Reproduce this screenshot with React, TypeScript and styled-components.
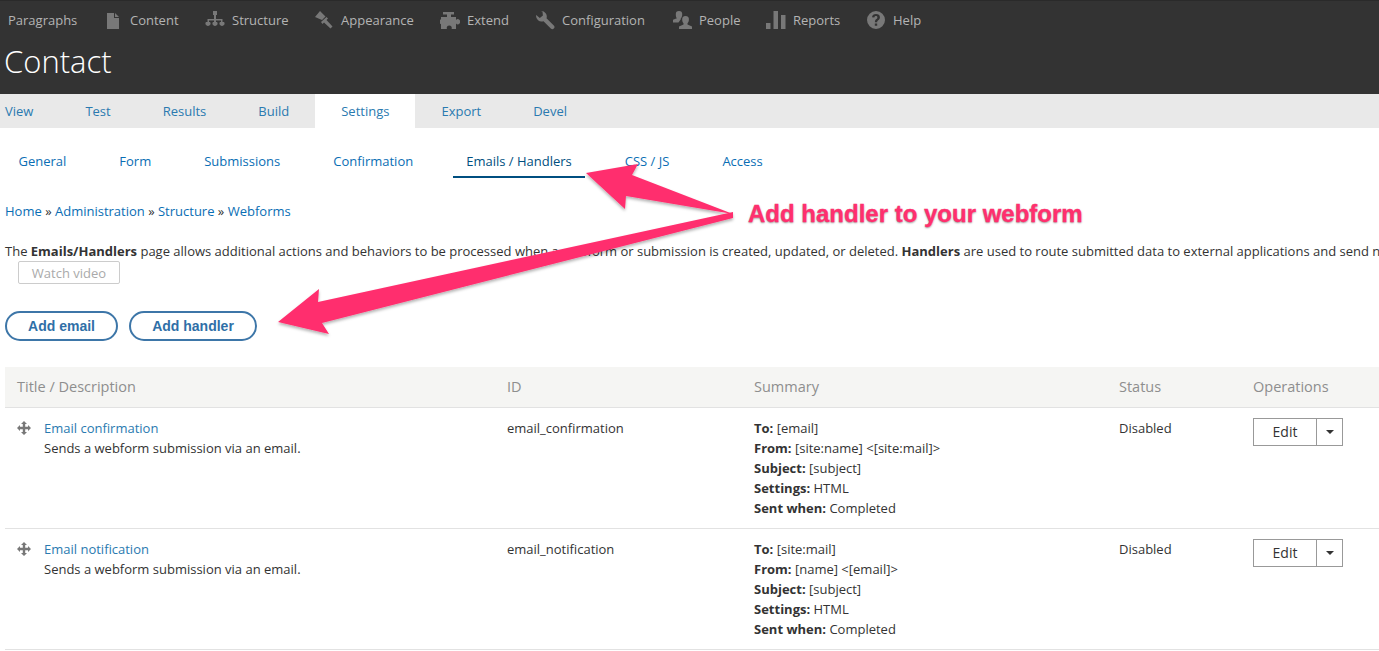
import styled, { createGlobalStyle } from "styled-components";
import type { ReactNode } from "react";

const GlobalStyle = createGlobalStyle`
  html, body {
    margin: 0;
    padding: 0;
    background: #fff;
    overflow: hidden;
  }
  body {
    font-family: "Open Sans", "Noto Sans", sans-serif;
    font-size: 13px;
    color: #333;
  }
`;

const Page = styled.div`
  position: relative;
  width: 1379px;
  height: 651px;
  overflow: hidden;
`;

const Header = styled.header`
  background: #333;
  height: 94px;
  border-top: 1px solid #2a2a2a;
  box-sizing: border-box;
`;

const Toolbar = styled.nav`
  display: flex;
  align-items: center;
  height: 38px;
  padding-left: 8px;
`;

const ToolItem = styled.a<{ $w: number }>`
  display: flex;
  align-items: center;
  width: ${(p) => p.$w}px;
  flex: none;
  color: #b4b4b4;
  white-space: nowrap;
`;

const ToolIcon = styled.svg`
  width: 20px;
  height: 20px;
  margin-right: 7px;
  fill: #787878;
  flex: none;
`;

const PageTitle = styled.h1`
  margin: 0;
  padding-left: 4px;
  color: #fff;
  font-size: 31px;
  font-weight: 300;
  line-height: 44px;
`;

const PrimaryTabs = styled.div`
  display: flex;
  height: 34px;
  background: #e9e9e9;
`;

const PrimaryTab = styled.a<{ $active?: boolean }>`
  display: flex;
  align-items: center;
  padding: 0 26px;
  background: ${(p) => (p.$active ? "#fff" : "transparent")};
  color: #2a7ab0;
  &:first-child {
    padding-left: 5px;
  }
`;

const SecondaryTabs = styled.div`
  display: flex;
  gap: 26px;
  padding: 23px 0 0 5px;
`;

const SecondaryTab = styled.a<{ $active?: boolean }>`
  padding: 0 13.5px 5px;
  line-height: 20px;
  border-bottom: 2px solid ${(p) => (p.$active ? "#004f80" : "transparent")};
  color: ${(p) => (p.$active ? "#004f80" : "#0a6eb4")};
`;

const Breadcrumb = styled.div`
  padding-left: 5px;
  margin-top: 23px;
  line-height: 20px;
  color: #333;
  a {
    color: #0a6eb4;
  }
`;

const Intro = styled.p`
  margin: 20px 0 0;
  padding-left: 5px;
  line-height: 20px;
  white-space: nowrap;
  color: #333;
`;

const VideoButton = styled.div`
  display: flex;
  align-items: center;
  justify-content: center;
  width: 102px;
  height: 23px;
  margin: 0 0 0 18px;
  box-sizing: border-box;
  border: 1px solid #ccc;
  border-radius: 2px;
  color: #aaa;
`;

const Actions = styled.div`
  display: flex;
  gap: 11px;
  padding-left: 5px;
  margin-top: 27px;
`;

const ActionButton = styled.a<{ $w: number }>`
  display: flex;
  align-items: center;
  justify-content: center;
  width: ${(p) => p.$w}px;
  height: 30px;
  box-sizing: border-box;
  border: 2px solid #3d76a8;
  border-radius: 15px;
  color: #2f6fa7;
  font-family: "Liberation Sans", Arial, sans-serif;
  font-size: 14px;
  font-weight: 700;
`;

const Table = styled.div`
  margin: 26px 0 0 5px;
`;

const Row = styled.div`
  display: grid;
  grid-template-columns: 490px 247px 365px 134px 1fr;
  height: 121px;
  box-sizing: border-box;
  border-bottom: 1px solid #e2e2e2;
  line-height: 20px;
`;

const HeadRow = styled(Row)`
  height: 41px;
  align-items: center;
  background: #f5f5f3;
  color: #8e8e8e;
  font-size: 14.5px;
`;

const Cell = styled.div`
  padding: 10px 0 0 12px;
  white-space: nowrap;
`;

const HeadCell = styled.div`
  padding-left: 12px;
`;

const TitleCell = styled(Cell)`
  display: flex;
  gap: 13px;
`;

const DragHandle = styled.svg`
  width: 14px;
  height: 14px;
  margin-top: 3px;
  fill: #787878;
  flex: none;
`;

const RowLink = styled.a`
  display: block;
  color: #2a7ab0;
`;

const DropButton = styled.div`
  display: flex;
  width: 90px;
  height: 28px;
  box-sizing: border-box;
  border: 1px solid #999;
`;

const DropMain = styled.div`
  display: flex;
  align-items: center;
  justify-content: center;
  flex: 1;
  color: #333;
  font-size: 14px;
`;

const DropToggle = styled.div`
  display: flex;
  align-items: center;
  justify-content: center;
  width: 25px;
  border-left: 1px solid #999;
  &::after {
    content: "";
    border-top: 4px solid #333;
    border-left: 4px solid transparent;
    border-right: 4px solid transparent;
  }
`;

const Overlay = styled.svg`
  position: absolute;
  left: 0;
  top: 0;
  width: 1379px;
  height: 651px;
  pointer-events: none;
`;

const Callout = styled.div`
  position: absolute;
  left: 748px;
  top: 200px;
  color: #ff2f6e;
  font-family: "Liberation Sans", Arial, sans-serif;
  font-size: 24px;
  font-weight: 700;
  line-height: 28px;
  white-space: nowrap;
  -webkit-text-stroke: 0.3px #ff2f6e;
  text-shadow: 0 1px 2px rgba(0, 0, 0, 0.4);
`;

const toolIcons: Record<string, ReactNode> = {
  Content: <path d="M4 3h7v5h5v11H4zM12 3l4 4h-4z" />,
  Structure: (
    <path d="M8 1h4v4h-1v4h6.500v3H19a2.500 2.500 0 1 1-4 0h1v-1.500h-5V12h1a2.500 2.500 0 1 1-4 0h1v-1.500H4V12h1a2.500 2.500 0 1 1-4 0h1.500V9H9V5H8z" />
  ),
  Appearance: (
    <path d="M6 1l5.500 5.500L8 10 1 7zM12.500 7l1.500 1.500-1.500 1.500 6 6.500-2 2-6.500-6-1.500 1.500L7 12z" />
  ),
  Extend: (
    <path d="M3 2h11v2.500h-3V7h5v3a2.500 2.500 0 1 1 0 3.500V19h-4.500a2.500 2.500 0 1 0-4.500 0H1v-5.500a2.500 2.500 0 1 1 0-3.500V7h6V4.500H3z" />
  ),
  Configuration: (
    <path d="M6 1a5.500 5.500 0 0 1 5.500 7.200l7.300 7.300a2.100 2.100 0 0 1-3 3L8.500 11.200A5.500 5.500 0 0 1 1.200 5l3.600 3 3.100-2.500-.4-3.800z" />
  ),
  People: (
    <path d="M7 1a3.200 3.200 0 0 1 3.200 3.400c0 1.800-.6 3.200-1.400 3.900v1L6.500 12.500H1v-2.700l3.900-1.500C4.200 7.600 3.800 6.200 3.800 4.400A3.200 3.200 0 0 1 7 1zM13.500 6a3.400 3.400 0 0 1 3.400 3.600c0 1.700-.6 3-1.400 3.700v1.200l4.500 2V19H7v-2.500l4.500-2v-1.200c-.8-.7-1.300-2-1.300-3.700A3.400 3.400 0 0 1 13.500 6z" />
  ),
  Reports: <path d="M0 13h4.500v6H0zM7.500 1H12v18H7.500zM15 5h4.500v14H15z" />,
  Help: (
    <path
      fillRule="evenodd"
      d="M10 1a9 9 0 1 1 0 18 9 9 0 0 1 0-18zM10 4C7.700 4 6.300 5.200 6 7.200l2.300.4c.2-1 .7-1.500 1.600-1.500.9 0 1.500.5 1.500 1.300 0 .7-.4 1.100-1 1.600-1 .8-1.500 1.500-1.500 2.900v.4h2.300v-.3c0-.8.3-1.100 1-1.700 1-.8 1.700-1.600 1.700-3C13.900 5.100 12.300 4 10 4zM8.800 13.400v2.300h2.400v-2.300z"
    />
  ),
};

const tools: [string, number][] = [
  ["Content", 102],
  ["Structure", 109],
  ["Appearance", 126],
  ["Extend", 95],
  ["Configuration", 137],
  ["People", 94],
  ["Reports", 100],
  ["Help", 60],
];

const handlers = [
  {
    title: "Email confirmation",
    id: "email_confirmation",
    to: "[email]",
    from: "[site:name] <[site:mail]>",
  },
  {
    title: "Email notification",
    id: "email_notification",
    to: "[site:mail]",
    from: "[name] <[email]>",
  },
];

export default function App() {
  return (
    <Page>
      <GlobalStyle />
      <Header>
        <Toolbar>
          <ToolItem $w={95}>Paragraphs</ToolItem>
          {tools.map(([name, w]) => (
            <ToolItem key={name} $w={w}>
              <ToolIcon viewBox="0 0 20 20">{toolIcons[name]}</ToolIcon>
              {name}
            </ToolItem>
          ))}
        </Toolbar>
        <PageTitle>Contact</PageTitle>
      </Header>
      <PrimaryTabs>
        <PrimaryTab>View</PrimaryTab>
        <PrimaryTab>Test</PrimaryTab>
        <PrimaryTab>Results</PrimaryTab>
        <PrimaryTab>Build</PrimaryTab>
        <PrimaryTab $active>Settings</PrimaryTab>
        <PrimaryTab>Export</PrimaryTab>
        <PrimaryTab>Devel</PrimaryTab>
      </PrimaryTabs>
      <SecondaryTabs>
        <SecondaryTab>General</SecondaryTab>
        <SecondaryTab>Form</SecondaryTab>
        <SecondaryTab>Submissions</SecondaryTab>
        <SecondaryTab>Confirmation</SecondaryTab>
        <SecondaryTab $active>Emails / Handlers</SecondaryTab>
        <SecondaryTab>CSS / JS</SecondaryTab>
        <SecondaryTab>Access</SecondaryTab>
      </SecondaryTabs>
      <Breadcrumb>
        <a>Home</a> » <a>Administration</a> » <a>Structure</a> » <a>Webforms</a>
      </Breadcrumb>
      <Intro>
        The <b>Emails/Handlers</b> page allows additional actions and behaviors to be processed when a webform or submission is created, updated, or deleted. <b>Handlers</b> are used to route submitted data to external applications and send notifications and confirmations.
      </Intro>
      <VideoButton>Watch video</VideoButton>
      <Actions>
        <ActionButton $w={113}>Add email</ActionButton>
        <ActionButton $w={128}>Add handler</ActionButton>
      </Actions>
      <Table>
        <HeadRow>
          <HeadCell>Title / Description</HeadCell>
          <HeadCell>ID</HeadCell>
          <HeadCell>Summary</HeadCell>
          <HeadCell>Status</HeadCell>
          <HeadCell>Operations</HeadCell>
        </HeadRow>
        {handlers.map((h) => (
          <Row key={h.id}>
            <TitleCell>
              <DragHandle viewBox="0 0 14 14">
                <path d="M7 0l3 3H8.200v2.800H11V4l3 3-3 3V8.200H8.200V11H10l-3 3-3-3h1.800V8.200H3V10L0 7l3-3v1.800h2.800V3H4z" />
              </DragHandle>
              <div>
                <RowLink>{h.title}</RowLink>
                Sends a webform submission via an email.
              </div>
            </TitleCell>
            <Cell>{h.id}</Cell>
            <Cell>
              <div><b>To:</b> {h.to}</div>
              <div><b>From:</b> {h.from}</div>
              <div><b>Subject:</b> [subject]</div>
              <div><b>Settings:</b> HTML</div>
              <div><b>Sent when:</b> Completed</div>
            </Cell>
            <Cell>Disabled</Cell>
            <Cell>
              <DropButton>
                <DropMain>Edit</DropMain>
                <DropToggle />
              </DropButton>
            </Cell>
          </Row>
        ))}
      </Table>
      <Overlay viewBox="0 0 1379 651">
        <defs>
          <filter id="arrowShadow" x="-10%" y="-10%" width="120%" height="130%">
            <feDropShadow dx="0" dy="2" stdDeviation="1.500" floodColor="#000" floodOpacity="0.3" />
          </filter>
        </defs>
        <g fill="#ff2f6e" filter="url(#arrowShadow)">
          <path d="M586 173 638 164 632 175 733 214 626 196 625 209z" />
          <path d="M278 322 319 289 318 302 733 212 733 218 322 323 329 334z" />
        </g>
      </Overlay>
      <Callout>Add handler to your webform</Callout>
    </Page>
  );
}
